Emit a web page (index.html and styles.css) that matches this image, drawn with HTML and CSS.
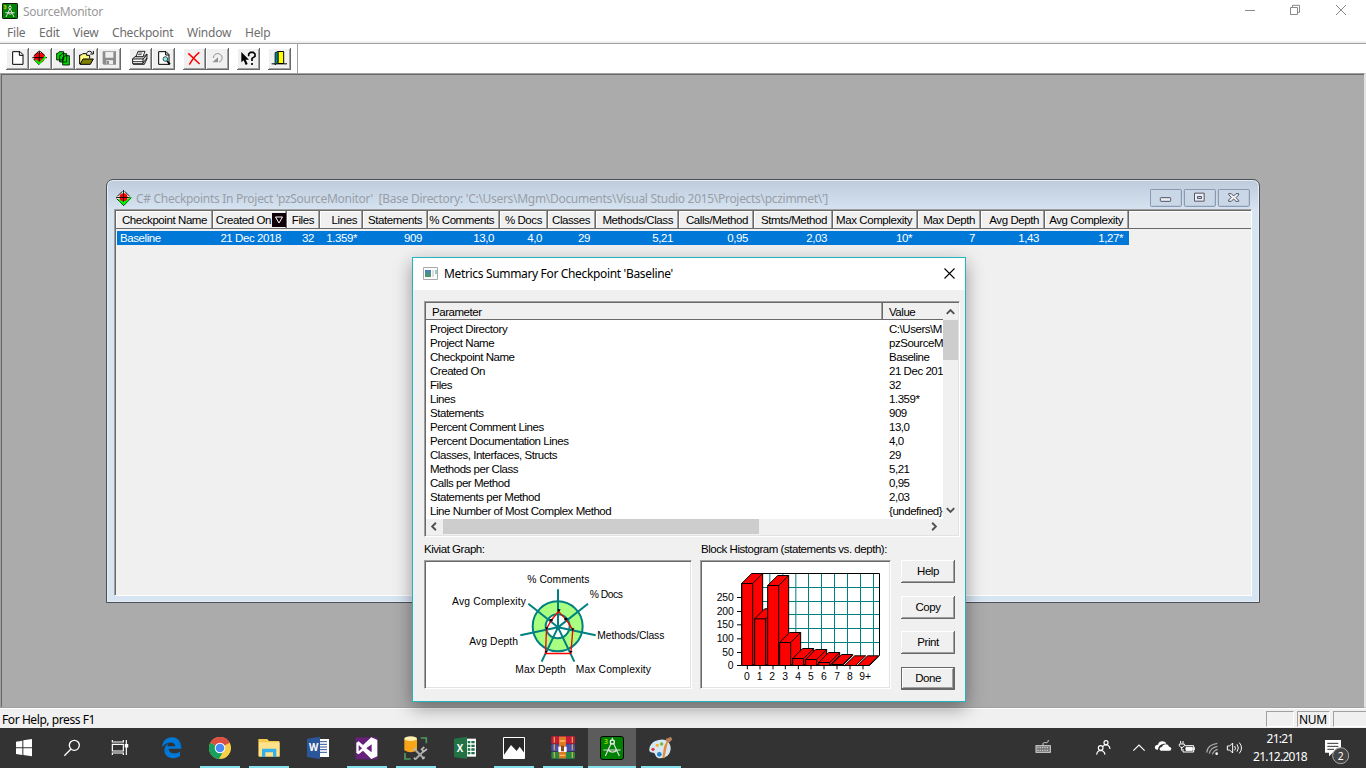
FILE: index.html
```html
<!DOCTYPE html>
<html lang="en">
<head>
<meta charset="utf-8">
<title>SourceMonitor</title>
<link rel="stylesheet" href="styles.css">
</head>
<body>
<svg class="defs" width="0" height="0">
  <symbol id="app" viewBox="0 0 48 48">
    <rect x="1" y="1" width="46" height="46" rx="4" fill="#008000" stroke="#000" stroke-width="3"/>
    <path d="M5 8h7v9H6M7 12h5" fill="none" stroke="#cfe000" stroke-width="2.5"/>
    <path d="M24 5v5M24 16L12 42M24 16l12 26M10 29h28M17 30q8 8 15 0" fill="none" stroke="#d8d8d8" stroke-width="3"/>
    <circle cx="24" cy="14" r="4" fill="#008000" stroke="#d8d8d8" stroke-width="3"/>
  </symbol>
  <symbol id="target" viewBox="0 0 48 48">
    <path d="M2 23L22.500 2 44 23 23 44z" fill="#e8ece8"/>
    <path d="M4 28h38L23 47z" fill="#0f0"/>
    <circle cx="22.500" cy="22" r="12" fill="#f00"/>
    <path d="M0 22.500h44M22.500 0v36M4 19L19 4M26 4l15 15M2 26l21 21 23-24" fill="none" stroke="#000" stroke-width="2.500"/>
    <path d="M9 31l14 12 22-22" fill="none" stroke="#0e0" stroke-width="4"/>
  </symbol>
</svg>

<header class="titlebar">
  <svg class="app-icon" viewBox="0 0 48 48"><use href="#app"/></svg>
  <span class="app-name">SourceMonitor</span>
  <svg class="caption" viewBox="540 0 378 66" fill="none" stroke="#8a8a8a" stroke-width="3"><path d="M555 31.500h30M691.500 22.500h21v21h-21zM697.500 22v-6h21v21h-6"/><path d="M828 15l30 30M858 15l-30 30" stroke-width="3"/></svg>
</header>
<nav class="menu"><span class="m1">File</span><span class="m2">Edit</span><span class="m3">View</span><span class="m4">Checkpoint</span><span class="m5">Window</span><span class="m6">Help</span></nav>
<div class="toolbar">
  <div class="tools">
    <svg class="tool" viewBox="18 144 69 66"><path d="M38 155h22l9 9v29H38zM58 155v11h11" fill="#fff" stroke="#000" stroke-width="3"/></svg>
    <svg class="tool" viewBox="87 144 69 66"><circle cx="118" cy="173" r="16" fill="#f00"/><path d="M97 173h44M118 152v32M101 168l15-14M121 154l14 13M101 177l17 18" fill="none" stroke="#000" stroke-width="3"/><path d="M106 180l12 10 19-20" fill="none" stroke="#0e0" stroke-width="6"/></svg>
    <svg class="tool" viewBox="156 144 69 66" fill="#00d800" stroke="#000" stroke-width="2.500"><path d="M170 160h4l4-5h13v25h-21zM179 166h4l4-5h13v25h-21zM188 172h4l4-5h12v28h-20z"/></svg>
    <svg class="tool" viewBox="225 144 69 66"><path d="M239 192v-27h5l4-4h12v5h9v9" fill="#fffb80" stroke="#000" stroke-width="3"/><path d="M240 193l9-16h31l-9 16z" fill="#808000" stroke="#000" stroke-width="3"/><path d="M260 158q9-9 17 1m3-6v9h-9" fill="none" stroke="#000" stroke-width="3"/></svg>
    <svg class="tool" viewBox="294 144 69 66"><path d="M308 154h40v40h-37l-3-3z" fill="#8c8c8c"/><path d="M316 156h24v17h-24zM319 181h20v12h-20z" fill="#efefef"/><path d="M320 183h7v9h-7z" fill="#8c8c8c"/></svg>
    <svg class="tool gap-a" viewBox="387 144 69 66" stroke="#000" stroke-width="2.500"><path d="M398 176l10-8h25l8-6v14l-8 17h-33z" fill="#ccc"/><path d="M408 170l6-16h21l-6 16z" fill="#fff"/><path d="M398 177h31v14h-31zM399 185h30M429 177l12-13M429 189l12-15" fill="#fff"/><path d="M415 159h12M413 164h12" stroke-width="2"/></svg>
    <svg class="tool" viewBox="456 144 69 66"><path d="M476 155h22l9 9v29h-31zM497 155v10h10" fill="#fff" stroke="#000" stroke-width="3"/><circle cx="496" cy="177" r="7" fill="#8ee" stroke="#000" stroke-width="2"/><path d="M501 183l9 10" stroke="#000" stroke-width="5"/></svg>
    <svg class="tool gap-b" viewBox="549 144 69 66"><path d="M565 160l34 32M598 157q-17 13-30 37" fill="none" stroke="#f00" stroke-width="4.500"/></svg>
    <svg class="tool" viewBox="618 144 69 66"><path d="M640 174q2-15 16-13 14 5 9 18-3 6-8 7" fill="none" stroke="#929292" stroke-width="3"/><path d="M637 187l17-15v15z" fill="#929292"/></svg>
    <svg class="tool gap-c" viewBox="711 144 69 66"><path d="M724 156v31l7-6 6 14 6-3-6-13h10z" fill="#000"/><path d="M746 169v-7l5-5h9l5 5v7l-9 6v8M756 189v6" fill="none" stroke="#000" stroke-width="5"/></svg>
    <svg class="tool gap-c" viewBox="804 144 69 66"><path d="M815 191.500h46" stroke="#000" stroke-width="3"/><path d="M834 154.500h17v36h-17z" fill="#ff0" stroke="#000" stroke-width="3"/><path d="M825 158l9-4v33l-9 8z" fill="#088080" stroke="#000" stroke-width="2"/></svg>
  </div>
</div>

<main class="mdi">
  <section class="child">
    <div class="child-title">
      <svg class="target" viewBox="0 0 48 48"><use href="#target"/></svg>
      <span class="child-name">C# Checkpoints In Project 'pzSourceMonitor'&nbsp; [Base Directory: 'C:\Users\Mgm\Documents\Visual Studio 2015\Projects\pczimmet\']</span>
      <svg class="child-btns" viewBox="570 42 303 57"><g fill="#cad7e7" stroke="#7e8da8" stroke-width="3"><rect x="571" y="43" width="93" height="51" rx="3"/><rect x="673" y="43" width="93" height="51" rx="3"/><rect x="775" y="43" width="93" height="51" rx="3"/></g><g fill="#eee" stroke="#51556a" stroke-width="3"><rect x="601" y="68" width="31" height="11" rx="2"/><path d="M703.500 54.500h29v24h-29zM712.500 64.500h12v6h-12z" fill-rule="evenodd"/><path d="M806 56h8l7 7 7-7h8v4l-8 8 8 8v3h-8l-7-7-7 7h-8v-4l8-8-8-8z"/></g></svg>
    </div>
    <div class="grid">
      <div class="grid-head">
        <span class="c1">Checkpoint Name</span><span class="c2">Created On<svg class="sort" viewBox="0 0 14 14"><path d="M0 0h14v14H0z" fill="#100008"/><path d="M3.500 4h7L7 10z" fill="none" stroke="#fff"/></svg></span><span class="c3">Files</span><span class="c4">Lines</span><span class="c5">Statements</span><span class="c6">% Comments</span><span class="c7">% Docs</span><span class="c8">Classes</span><span class="c9">Methods/Class</span><span class="c10">Calls/Method</span><span class="c11">Stmts/Method</span><span class="c12">Max Complexity</span><span class="c13">Max Depth</span><span class="c14">Avg Depth</span><span class="c15">Avg Complexity</span><span class="rest"></span>
      </div>
      <div class="grid-row">
        <span class="c1">Baseline</span><span class="c2">21 Dec 2018</span><span class="c3">32</span><span class="c4">1.359*</span><span class="c5">909</span><span class="c6">13,0</span><span class="c7">4,0</span><span class="c8">29</span><span class="c9">5,21</span><span class="c10">0,95</span><span class="c11">2,03</span><span class="c12">10*</span><span class="c13">7</span><span class="c14">1,43</span><span class="c15">1,27*</span>
      </div>
    </div>
  </section>
</main>

<section class="dialog">
  <div class="dlg-title">
    <svg class="dlg-icon" viewBox="0 0 15 13"><defs><linearGradient id="g" x2="0" y2="1"><stop stop-color="#4a7fc0"/><stop offset="1" stop-color="#4c9a62"/></linearGradient></defs><path d="M.5.500h14v12H.5z" fill="#fbfbfb" stroke="#aaa"/><path d="M2 3h6v7H2z" fill="url(#g)"/><path d="M9 3h2v7H9z" fill="#ddd"/><path d="M12 3h2v4h-2z" fill="#9cc8c0"/></svg>
    <span class="dlg-name">Metrics Summary For Checkpoint 'Baseline'</span>
    <svg class="dlg-close" viewBox="0 0 11 11"><path d="M.5.500l10 10M10.500.500l-10 10" stroke="#000" stroke-width="1.100"/></svg>
  </div>
  <div class="dlg-body">
    <div class="list">
      <div class="list-main">
        <div class="list-view">
          <div class="list-head"><span class="p">Parameter</span><span class="v">Value</span></div>
          <div class="rows">
            <div class="row"><span>Project Directory</span><b>C:\Users\M</b></div>
            <div class="row"><span>Project Name</span><b>pzSourceM</b></div>
            <div class="row"><span>Checkpoint Name</span><b>Baseline</b></div>
            <div class="row"><span>Created On</span><b>21 Dec 201</b></div>
            <div class="row"><span>Files</span><b>32</b></div>
            <div class="row"><span>Lines</span><b>1.359*</b></div>
            <div class="row"><span>Statements</span><b>909</b></div>
            <div class="row"><span>Percent Comment Lines</span><b>13,0</b></div>
            <div class="row"><span>Percent Documentation Lines</span><b>4,0</b></div>
            <div class="row"><span>Classes, Interfaces, Structs</span><b>29</b></div>
            <div class="row"><span>Methods per Class</span><b>5,21</b></div>
            <div class="row"><span>Calls per Method</span><b>0,95</b></div>
            <div class="row"><span>Statements per Method</span><b>2,03</b></div>
            <div class="row"><span>Line Number of Most Complex Method</span><b>{undefined}</b></div>
          </div>
        </div>
        <div class="vscroll">
          <svg class="arrow" viewBox="0 0 16 17"><path d="M4 11l4-4 4 4" fill="none" stroke="#505050" stroke-width="2"/></svg>
          <div class="vthumb"></div>
          <svg class="arrow down" viewBox="0 0 16 17"><path d="M4 6l4 4 4-4" fill="none" stroke="#505050" stroke-width="2"/></svg>
        </div>
      </div>
      <div class="hscroll">
        <svg class="harrow" viewBox="0 0 17 16"><path d="M10 4L6 8l4 4" fill="none" stroke="#505050" stroke-width="2"/></svg>
        <div class="hthumb"></div>
        <svg class="harrow right" viewBox="0 0 17 16"><path d="M6 4l4 4-4 4" fill="none" stroke="#505050" stroke-width="2"/></svg>
      </div>
    </div>
    <div class="lower">
      <div class="kiviat">
        <div class="label">Kiviat Graph:</div>
        <svg class="panel" viewBox="18 66 792 375">
          <circle cx="413" cy="259" r="75" fill="#a8ff80" stroke="#008080" stroke-width="6"/>
          <circle cx="413" cy="259" r="36" fill="#fff" stroke="#008080" stroke-width="6"/>
          <path d="M414 148v114l90-71M414 262l113 24M414 262l49 103M414 262l-49 103M414 262l-113 24M414 262l-89-71" fill="none" stroke="#008080" stroke-width="6"/>
          <path d="M415.500 214l22 24 21 31-6 71.500h-76l3-74.500 15-26z" fill="none" stroke="#f00" stroke-width="4"/>
          <path d="M412 208h10l-5 9zM433 234h9v7h-9zM454 265h9l-5 8zM448 333h10l-5 6zM374 333h9l-5 6zM376 262h9l-5 8zM389 237h9v7h-9z"/>
          <g class="gtext">
            <text x="322" y="129" textLength="186">% Comments</text><text x="509" y="174" textLength="100">% Docs</text><text x="96" y="195" textLength="222">Avg Complexity</text><text x="532" y="297" textLength="201">Methods/Class</text><text x="148" y="315" textLength="146">Avg Depth</text><text x="286" y="399" textLength="151">Max Depth</text><text x="467" y="399" textLength="226">Max Complexity</text>
          </g>
        </svg>
      </div>
      <div class="hist">
        <div class="label l2">Block Histogram (statements vs. depth):</div>
        <svg class="panel" viewBox="21 66 561 375">
          <path d="M185.500 100v247M224.500 100v247M263.500 100v247M302.500 100v247M340.500 100v247M379.500 100v247M418.500 100v247M457.500 100v247M496.500 100v247M535.500 100v247M170 142.500h383M170 184.500h383M170 223.500h383M170 265.500h383M170 307.500h383" stroke="#008080" stroke-width="3"/>
          <g fill="#f00" stroke="#000" stroke-width="3" stroke-linejoin="round">
            <path d="M170 100.500h383.500V347l-30 29.500" fill="none"/>
            <path d="M140 130.500l30-30h33v246l-30 30h-33zM140 130.500h33v246M173 130.500l30-30"/>
            <path d="M179 236.500l30-30h33v140l-30 30h-33zM179 236.500h33v140M212 236.500l30-30"/>
            <path d="M218 136.500l30-30h33v240l-30 30h-33zM218 136.500h33v240M251 136.500l30-30"/>
            <path d="M254 307.500l30-30h33v69l-30 30h-33zM254 307.500h33v69M287 307.500l30-30"/>
            <path d="M293 355.500l30-30h33v21l-30 30h-33zM293 355.500h33v21M326 355.500l30-30"/>
            <path d="M332 358.500l30-30h33v18l-30 30h-33zM332 358.500h33v18M365 358.500l30-30"/>
            <path d="M371 367.500l30-30h33v9l-30 30h-33zM371 367.500h33v9M404 367.500l30-30"/>
            <path d="M410 373.500l30-30h33v3l-30 30h-33zM410 373.500h33v3M443 373.500l30-30"/>
            <path d="M449 376.500l30-29h33l-30 29zM488 376.500l30-29h33l-30 29z"/>
            <path d="M140 376.500h384M140 130v246M126 172.500h14M126 214.500h14M126 254.500h14M126 296.500h14M126 337.500h14M126 376.500h14M157 376v12M195 376v12M234 376v12M271 376v12M310 376v12M348 376v12M387 376v12M426 376v12M465 376v12M504 376v12" fill="none"/>
          </g>
          <g class="gtext"><text x="65" y="183" textLength="51">250</text><text x="65" y="224" textLength="51">200</text><text x="65" y="264" textLength="51">150</text><text x="65" y="306" textLength="51">100</text><text x="82" y="347" textLength="34">50</text><text x="98" y="386">0</text>
          <text x="147" y="420">0</text><text x="185" y="420">1</text><text x="223" y="420">2</text><text x="262" y="420">3</text><text x="301" y="420">4</text><text x="339" y="420">5</text><text x="378" y="420">6</text><text x="418" y="420">7</text><text x="456" y="420">8</text><text x="493" y="420">9+</text></g>
        </svg>
      </div>
      <div class="buttons"><div class="btn">Help</div><div class="btn">Copy</div><div class="btn print">Print</div><div class="btn done">Done</div></div>
    </div>
  </div>
</section>

<div class="status"><span class="hint">For Help, press F1</span><span class="box b1"></span><span class="box b2">NUM</span><span class="box b3"></span></div>

<footer class="taskbar">
  <svg class="sys" viewBox="0 69 144 120" fill="#fff"><path d="M48 110l19-3v20H48zM70 106l26-4v25H70zM48 130h19v20l-19-3zM70 130h26v24l-26-4z"/></svg>
  <svg class="sys" viewBox="144 69 144 120" fill="none" stroke="#fff" stroke-width="4"><circle cx="223" cy="121" r="15"/><path d="M213 132l-20 20"/></svg>
  <svg class="sys" viewBox="288 69 144 120" fill="none" stroke="#fff" stroke-width="3.500"><path d="M337 105v6h33v-6M337 118h33v20h-33zM337 150v-6h33v6M379 105v45"/><path d="M376 119h7v7h-7z" fill="#fff"/></svg>
  <div class="task first"><svg viewBox="441 69 144 120"><path d="M486 126c3-21 15-29 30-29 18 0 28 14 28 34h-38c1 15 19 18 34 9v14c-22 12-47 4-47-18 0-10 6-17 13-21-3 4-4 7-4 9h24c0-15-23-17-40 2z" fill="#0078d7"/></svg></div>
  <div class="task open"><svg viewBox="588 69 144 120"><circle cx="660" cy="129" r="33" fill="#f8d048"/><path d="M660 129L631 113a33 33 0 0 1 58 0z" fill="#dd4f43"/><path d="M660 129l-29-16a33 33 0 0 0 26 49l15-27z" fill="#16a05d"/><circle cx="660" cy="129" r="16" fill="#fff"/><circle cx="660" cy="129" r="13" fill="#4a8af4"/></svg></div>
  <div class="task open"><svg viewBox="735 69 144 120"><path d="M775 102h27l5 6h31v46h-63z" fill="#f5c94e"/><path d="M777 112h62v43h-62z" fill="#ffe28b"/><path d="M786 156v-25h43v25h-10v-14h-23v14z" fill="#35b0ea"/></svg></div>
  <div class="task"><svg viewBox="882 69 144 120"><path d="M955 102h32v54h-32z" fill="#fff"/><path d="M960 110h21M960 118h21M960 126h21M960 134h21M960 142h21" stroke="#2b579a" stroke-width="3"/><path d="M921 101l39-6v67l-39-6z" fill="#2b579a"/><text x="927" y="139" class="letter">W</text></svg></div>
  <div class="task open"><svg viewBox="1029 69 144 120"><path d="M1067 97h66v66h-66z" fill="#68217a"/><path fill-rule="evenodd" d="M1114 97l18 8v49l-18 8-25-25-13 11-7-4v-31l7-4 13 11zM1076 120v19l10-9zM1115 118l-16 12 16 12z" fill="#fff"/></svg></div>
  <div class="task open"><svg viewBox="6 9 144 120"><path d="M43 41v35q19 12 38 0V41z" fill="#f9a51a"/><ellipse cx="62" cy="41" rx="19" ry="7" fill="#fff0b0"/><path d="M92 39h17v16M45 84v18h17" fill="none" stroke="#4f9960" stroke-width="5"/><path d="M76 75l26 26M103 76l-26 26" stroke="#aaa" stroke-width="6"/><path d="M103 66l-8 7 6 7 10-8M77 69l-7 7M72 98l5 6M97 102l7-6" fill="none" stroke="#bbb" stroke-width="5"/></svg></div>
  <div class="task"><svg viewBox="153 9 144 120"><path d="M226 41h32v54h-32z" fill="#fff"/><path d="M233 48h8v7h-8zM244 48h10v7h-10zM233 59h8v7h-8zM244 59h10v7h-10zM233 70h8v7h-8zM244 70h10v7h-10zM233 81h8v7h-8zM244 81h10v7h-10z" fill="#217346"/><path d="M192 41l39-6v67l-39-6z" fill="#217346"/><text x="200" y="81" class="letter">X</text></svg></div>
  <div class="task open"><svg viewBox="300 9 144 120"><path d="M340.500 37.500h63v63h-63z" stroke="#fff" stroke-width="3" fill="#282828"/><path d="M341 91l22-31 17 18 9-13 14 19v17h-62z" fill="#fff"/></svg></div>
  <div class="task open"><svg viewBox="447 9 144 120"><rect x="484" y="34" width="71" height="22" rx="3" fill="#c91840"/><rect x="484" y="58" width="71" height="21" rx="3" fill="#4a4cb2"/><rect x="484" y="81" width="71" height="20" rx="3" fill="#238a48"/><path d="M493 35v65M547 35v65" stroke="#d4a72e" stroke-width="4" stroke-dasharray="18 5"/><path d="M507 35h21v65h-21z" fill="#df7a25"/><path d="M505 65h25v16h-25z" fill="#fff"/><path d="M513 62h9v17h-9z" fill="#8b4b20"/><path d="M509 48h17M509 91h17" stroke="#f7c060" stroke-width="4"/></svg></div>
  <div class="task open active"><svg viewBox="594 9 144 120"><rect x="631.500" y="34.500" width="69" height="69" rx="7" fill="#008000" stroke="#000" stroke-width="3"/><text x="641" y="57" class="three">3</text><path d="M667 38v8M664 54l-18 39M670 54l18 39M640 75h52M654 75q13 13 28 0" fill="none" stroke="#ddd" stroke-width="3.500"/><circle cx="667" cy="51" r="6" fill="#008000" stroke="#eee" stroke-width="4"/></svg></div>
  <div class="task open"><svg viewBox="741 9 144 120"><path d="M812 44c20-2 30 12 30 26 0 17-13 30-31 30-17 0-13-16-21-17-12 0-14-5-11-16 4-15 18-22 33-23z" fill="#d5e7f3"/><circle cx="802" cy="61" r="5" fill="#f7b028"/><circle cx="815" cy="57" r="5" fill="#74b83a"/><circle cx="789" cy="73" r="5" fill="#e03c33"/><circle cx="808" cy="88" r="7" fill="#2583c5"/><path d="M817 99l5-34 8-16 4 3-4 15-7 33z" fill="#e68a38"/><path d="M827 41l7-1 8-5 5 8-8 9-8-1z" fill="#b98259"/></svg></div>
  <div class="tray">
    <svg class="t1" viewBox="30 69 78 120" fill="none" stroke="#d5d5d5" stroke-width="3"><rect x="48" y="122" width="43" height="20" fill="#777"/><path d="M52 128h35M52 136h35" stroke-dasharray="4 3"/><path d="M69 121c-1-8 2-9 8-8 5 1 8-2 8-8"/></svg>
    <svg class="t2" viewBox="210 69 78 120" fill="none" stroke="#fff" stroke-width="3.500"><circle cx="258" cy="113" r="6"/><circle cx="242" cy="129" r="7"/><path d="M230 149q1-12 12-13 11 1 13 13M249 124q4-5 9-5 10 1 12 13"/></svg>
    <svg class="t3" viewBox="324 69 66 120" fill="none" stroke="#fff" stroke-width="3.500"><path d="M340 137l17-17 17 17"/></svg>
    <svg class="t4" viewBox="393 69 72 120" fill="#fff"><path d="M414 134c-13 1-12-15 0-15 1-12 20-14 25-3-14-1-24 5-25 18z"/><path d="M424 137c-8-1-6-11 2-11 3-11 19-11 21-1 9 0 9 12 1 12z"/></svg>
    <svg class="t5" viewBox="468 69 72 120" fill="none" stroke="#fff" stroke-width="3"><path d="M494 122h27v19h-32v-9M523 127v8M482 116v-8M489 116v-8M478 117h15v5l-4 5h-7l-4-5zM485 127v10"/><path d="M498 127h19v9h-19z" fill="#fff"/></svg>
    <svg class="t6" viewBox="546 69 60 120" fill="none" stroke="#aaa" stroke-width="3.500"><path d="M560 143q2-24 32-28M568 146q3-18 24-22M577 148q4-12 16-15"/><circle cx="590" cy="146" r="4" fill="#fff" stroke="none"/></svg>
    <svg class="t7" viewBox="612 69 66 120" fill="none" stroke="#fff" stroke-width="3"><path d="M622 123h7l9-9v30l-9-9h-7zM644 123q5 7 0 13M651 118q8 11 0 22M658 113q13 16 0 32"/></svg>
    <div class="clock"><span class="time">21:21</span><span class="date">21.12.2018</span></div>
    <svg class="t8" viewBox="894 69 102 120"><path d="M915 105h48v38h-25l-11 11v-11h-12z" fill="#fff"/><path d="M922 115h33M922 124h33M922 133h20" stroke="#333" stroke-width="3"/><circle cx="962" cy="152" r="24" fill="#444" stroke="#aaa" stroke-width="3"/><text x="953" y="164" class="num">2</text></svg>
  </div>
</footer>
</body>
</html>
```
FILE: styles.css
```css
* { box-sizing: border-box; }
body { margin: 0; width: 1366px; height: 768px; overflow: hidden; display: flex; flex-direction: column; background: #fff; font-family: "Liberation Sans", sans-serif; font-size: 12px; color: #000; white-space: nowrap; }
svg { display: block; flex: none; }
.defs { position: absolute; }

.titlebar { height: 22px; flex: none; display: flex; align-items: center; padding-left: 2px; font-family: "Noto Sans", sans-serif; color: #999; }
.app-icon { width: 16px; height: 16px; margin-right: 5px; }
.app-name { letter-spacing: -.3px; line-height: 22px; padding-top: 2px; }
.caption { width: 126px; height: 22px; margin-left: auto; }
.menu { height: 22px; flex: none; display: flex; padding-left: 7px; line-height: 22px; font-family: "Noto Sans", sans-serif; color: #6d6d6d; border-bottom: 1px solid #a0a0a0; box-shadow: inset 0 -2px #f0f0f0; letter-spacing: -.2px; }
.m1 { width: 32px; }
.m2 { width: 34px; }
.m3 { width: 39px; }
.m4 { width: 75px; }
.m5 { width: 58px; }
.toolbar { height: 29px; flex: none; }
.tools { width: 298px; height: 29px; padding: 4px 0 0 6px; border-right: 1px solid #a0a0a0; display: flex; }
.tool { width: 23px; height: 22px; background: #f0f0f0; box-shadow: inset -1px -1px #696969, inset 1px 1px #fff, inset -2px -2px #a0a0a0; }
.gap-a, .gap-b, .gap-c { margin-left: 8px; }

.mdi { height: 635px; flex: none; background: #ababab; border: 1px solid #a0a0a0; border-width: 1px 2px 1px 1px; border-right-color: #e3e3e3; box-shadow: inset 1px 1px #696969; position: relative; }
.child { position: absolute; left: 105px; top: 105px; width: 1154px; height: 424px; border: 1px solid #4c4f54; border-radius: 7px 7px 0 0; background: linear-gradient(#bdcbdb, #d7e4f2 31px); padding: 0 7px 7px; box-shadow: inset 0 0 0 1px #e5eef8; }
.child-title { height: 29px; display: flex; align-items: center; padding: 7px 1px 0 2px; }
.target { width: 16px; height: 16px; margin-right: 4px; }
.child-name { font-family: "Noto Sans", sans-serif; color: #989ea8; letter-spacing: -.298px; }
.child-btns { width: 101px; height: 19px; margin-left: auto; }
.grid { height: 387px; border: 1px solid #a0a0a0; border-right-color: #fff; border-bottom-color: #fff; box-shadow: inset 1px 1px #696969; background: #f0f0f0; padding: 1px 0 0 1px; font-size: 11.5px; letter-spacing: -.42px; }
.grid-head, .grid-row { display: flex; text-align: right; }
.grid-head { height: 18px; line-height: 19px; border-bottom: 1px solid #696969; }
.grid-head span { padding-right: 6px; box-shadow: inset -1px 0 #696969, inset -2px 0 #a0a0a0, inset 1px 1px #fff; }
.grid-head .rest { flex: 1; box-shadow: inset 0 1px #fff; }
.grid-head .c2 { display: flex; align-items: flex-start; justify-content: flex-end; padding-right: 1px; }
.sort { width: 14px; height: 14px; margin: 2px 0 0 1px; }
.grid-row { height: 14px; line-height: 14px; margin: 2px 0 0 1px; width: 1012px; background: #0078d7; color: #fff; }
.grid-row span { padding-right: 6px; }
.grid-row .c1 { text-align: left; padding-left: 3px; width: 96px; }
.c1 { width: 97px; } .c2 { width: 74px; } .c3 { width: 33px; } .c4 { width: 43px; } .c5 { width: 65px; } .c6 { width: 72px; } .c7 { width: 48px; } .c8 { width: 48px; } .c9 { width: 83px; } .c10 { width: 75px; } .c11 { width: 79px; } .c12 { width: 85px; } .c13 { width: 63px; } .c14 { width: 64px; } .c15 { width: 84px; }
.grid span { flex: none; }
.grid .rest { flex: 1; }

.dialog { position: absolute; left: 412px; top: 257px; width: 554px; height: 445px; border: 1px solid #22b5bd; background: #f0f0f0; box-shadow: 0 6px 17px rgba(0,0,0,.38); font-size: 11.5px; letter-spacing: -.46px; }
.dlg-title { height: 32px; background: #fff; display: flex; align-items: center; padding: 0 10px 2px; }
.dlg-icon { width: 15px; height: 13px; margin-right: 6px; }
.dlg-name { font-family: "Noto Sans", sans-serif; font-size: 12px; letter-spacing: -.34px; }
.dlg-close { width: 11px; height: 11px; margin-left: auto; }
.dlg-body { padding: 11px 0 0 11px; }
.list { width: 536px; height: 236px; border: 1px solid; border-color: #a0a0a0 #fff #fff #a0a0a0; box-shadow: inset 1px 1px #696969, inset -1px -1px #e3e3e3; padding: 1px; background: #f0f0f0; }
.list-main { display: flex; height: 216px; }
.list-view { width: 517px; overflow: hidden; background: #fff; }
.list-head { display: flex; height: 17px; line-height: 19px; background: #f0f0f0; border-bottom: 1px solid #696969; }
.p { width: 457px; padding-left: 6px; box-shadow: inset -1px 0 #696969, inset -2px 0 #a0a0a0; }
.v { padding-left: 6px; }
.rows { padding-top: 2px; }
.row { display: flex; height: 14px; line-height: 14px; padding-left: 4px; }
.row span { width: 459px; flex: none; }
.row b { font-weight: normal; }
.vscroll { width: 15px; background: #f0f0f0; display: flex; flex-direction: column; }
.arrow { width: 15px; height: 17px; }
.vthumb { height: 40px; background: #cdcdcd; }
.down, .right { margin: auto 0 0 auto; }
.hscroll { height: 15px; width: 517px; display: flex; align-items: center; }
.harrow { width: 17px; height: 15px; }
.hthumb { width: 316px; height: 15px; background: #cdcdcd; }
.lower { display: flex; height: 153px; }
.kiviat { width: 268px; margin-right: 8px; }
.hist { width: 191px; margin-right: 10px; }
.label { height: 23px; line-height: 25px; }
.l2 { padding-left: 1px; }
.panel { width: 100%; height: 129px; background: #fff; border: 1px solid; border-color: #a0a0a0 #fff #fff #a0a0a0; box-shadow: inset 1px 1px #696969, inset -1px -1px #e3e3e3; padding: 1px; }
.gtext { font-size: 31px; letter-spacing: 0; }
.buttons { width: 54px; padding-top: 23px; display: flex; flex-direction: column; gap: 13px; }
.btn { height: 23px; line-height: 23px; text-align: center; background: #f0f0f0; box-shadow: inset -1px -1px #696969, inset 1px 1px #fff, inset -2px -2px #a0a0a0; }
.print { margin-top: -1px; }
.done { border: 1px solid #696969; line-height: 21px; }

.status { height: 20px; flex: none; background: #f0f0f0; border-top: 1px solid #fff; display: flex; padding: 2px 0 1px 2px; gap: 3px; font-family: "Noto Sans", sans-serif; line-height: 17px; }
.hint { flex: 1; letter-spacing: -.42px; }
.box { height: 16px; border: 1px solid; border-color: #a0a0a0 #fff #fff #a0a0a0; line-height: 15px; }
.b1 { width: 28px; }
.b2 { width: 33px; padding-left: 1px; letter-spacing: -.3px; }
.b3 { width: 33px; border-right: 0; }

.taskbar { height: 40px; flex: none; background: #333; display: flex; color: #fff; font-family: "Noto Sans", sans-serif; }
.sys { width: 48px; height: 40px; }
.task { width: 49px; height: 40px; }
.task svg { width: 48px; height: 40px; }
.first { margin-left: 3px; }
.open { background: linear-gradient(#85e2ec, #85e2ec) 4px 100% / 40px 2px no-repeat; }
.active { background: linear-gradient(#85e2ec, #85e2ec) 0 100% / 48px 2px no-repeat, linear-gradient(#5c5c5c, #5c5c5c) 0 0 / 48px 40px no-repeat; }
.letter { font: bold 29px "Open Sans", sans-serif; fill: #fff; }
.three { font: 22px "Open Sans", sans-serif; fill: #df0; }
.num { font: 31px "Noto Sans", sans-serif; fill: #fff; }
.tray { margin-left: auto; display: flex; padding-right: 14px; }
.tray svg { height: 40px; }
.t1 { width: 26px; margin-right: 34px; }
.t2 { width: 26px; margin-right: 12px; }
.t3 { width: 22px; margin-right: 1px; }
.t4 { width: 24px; margin-right: 1px; }
.t5 { width: 24px; margin-right: 2px; }
.t6 { width: 20px; margin-right: 2px; }
.t7 { width: 22px; margin-right: 2px; }
.t8 { width: 34px; }
.clock { width: 64px; margin-right: 6px; display: flex; flex-direction: column; align-items: center; line-height: 18px; padding-top: 2px; letter-spacing: -.75px; }
```
